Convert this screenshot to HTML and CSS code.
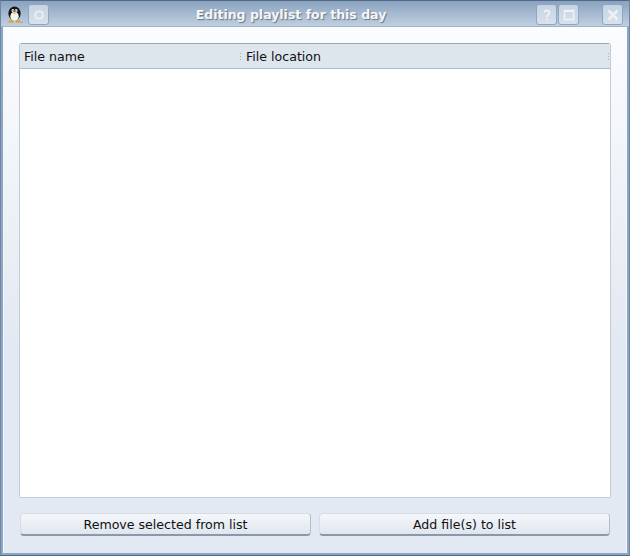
FILE: index.html
```html
<!DOCTYPE html>
<html lang="en">
<head>
<meta charset="utf-8">
<title>Editing playlist for this day</title>
<link rel="stylesheet" href="styles.css">
</head>
<body>
<div class="window">
  <div class="titlebar">
    <svg class="penguin" width="16" height="17" viewBox="0 0 17 18">
      <ellipse cx="8" cy="8" rx="6.500" ry="7.500" fill="#15151a"/>
      <ellipse cx="8" cy="11" rx="4.500" ry="4.800" fill="#f4f4f4"/>
      <ellipse cx="6.300" cy="5" rx="1.500" ry="1.800" fill="#f4f4f4"/>
      <ellipse cx="9.700" cy="5" rx="1.500" ry="1.800" fill="#f4f4f4"/>
      <circle cx="6.600" cy="5.200" r=".7" fill="#111"/>
      <circle cx="9.400" cy="5.200" r=".7" fill="#111"/>
      <path d="M5.600 6.800h4.800L8 8.600z" fill="#e8a317"/>
      <path d="M2 15h5l-.5 2.500H1.500zM9 15h5l.5 2.500H9.500z" fill="#e0a020"/>
      <path d="M14.500 17h2.500v1h-2.500z" fill="#6f7f90" opacity=".5"/>
    </svg>
    <div class="tbtn sticky">
      <svg width="12" height="12" viewBox="0 0 12 12"><circle cx="6" cy="6" r="3.800" fill="none" stroke="#e9eef4" stroke-width="2"/></svg>
    </div>
    <div class="title">Editing playlist for this day</div>
    <div class="tbtn">
      <svg width="12" height="14" viewBox="0 0 12 14"><path d="M3.500 4.500C3.500 1.800 8.500 1.800 8.500 4.500C8.500 6.500 6 6.500 6 9" fill="none" stroke="#eef2f7" stroke-width="2"/><rect x="5" y="10.500" width="2" height="2" fill="#eef2f7"/></svg>
    </div>
    <div class="tbtn">
      <svg width="12" height="12" viewBox="0 0 12 12"><rect x="1.500" y="1.500" width="9" height="9" fill="none" stroke="#eef2f7" stroke-width="1.500"/><rect x="1" y="1" width="10" height="2" fill="#eef2f7"/></svg>
    </div>
    <div class="tbtn close">
      <svg width="14" height="14" viewBox="0 0 14 14"><path d="M2.500 2.500L11.500 11.500M11.500 2.500L2.500 11.500" stroke="#eef2f7" stroke-width="2.500"/></svg>
    </div>
  </div>
  <div class="content">
    <div class="list">
      <div class="list-head">
        <div class="col col-name">File name<span class="grip"></span></div>
        <div class="col col-loc">File location<span class="grip"></span></div>
      </div>
      <div class="list-body"></div>
    </div>
    <div class="actions">
      <button class="btn" type="button">Remove selected from list</button>
      <button class="btn" type="button">Add file(s) to list</button>
    </div>
  </div>
</div>
</body>
</html>
```
FILE: styles.css
```css
* { box-sizing: border-box; }
html, body { margin: 0; padding: 0; }
body {
  width: 630px;
  height: 556px;
  overflow: hidden;
  font-family: "DejaVu Sans", sans-serif;
  font-size: 12.600px;
  color: #111;
}
.window {
  width: 630px;
  height: 556px;
  display: flex;
  flex-direction: column;
  border-top: 1px solid #4d6a8a;
  border-left: 1px solid #6c87a3;
  border-right: 1px solid #6c87a3;
  border-bottom: 1px solid #4f6a88;
  background: #8fa6c2;
}
.titlebar {
  height: 26px;
  flex: none;
  display: flex;
  align-items: center;
  padding: 3px 0 1px 6px;
  background: linear-gradient(#8aa2be, #b0c2d7 70%, #c0cfdf);
  border-bottom: 1px solid #9fb4cb;
}
.penguin { flex: none; margin-right: 5px; }
.tbtn {
  flex: none;
  width: 21px;
  height: 21px;
  margin-left: 1px;
  border: 1px solid #8fa6c0;
  border-radius: 3px;
  background: linear-gradient(#c5d3e3, #d8e1ec);
  display: flex;
  align-items: center;
  justify-content: center;
}
.tbtn.sticky { margin-left: 0; }
.tbtn.close { margin-left: 23px; margin-right: 6px; }
.title {
  flex: 1;
  text-align: center;
  font-weight: bold;
  font-size: 12.500px;
  color: #f4f6fa;
  padding-right: 2px;
  text-shadow: 1px 1px 1px #667686;
}
.content {
  flex: 1;
  margin: 0 2px 2px;
  padding: 16px 15px 17px;
  display: flex;
  flex-direction: column;
  background: linear-gradient(#fbfcfe, #e3e9f2 60%, #e3e9f2);
  border-left: 1px solid #f4f7fb;
  border-right: 1px solid #f4f7fb;
}
.list {
  flex: 1;
  display: flex;
  flex-direction: column;
  border: 1px solid #c3ccd6;
  border-top-color: #a4a9ae;
  border-radius: 3px 3px 2px 2px;
  background: #fff;
}
.list-head {
  height: 25px;
  flex: none;
  display: flex;
  background: #dde5ed;
  border-bottom: 1px solid #9cc0d8;
}
.col {
  position: relative;
  display: flex;
  align-items: center;
  padding-left: 4px;
}
.col-name { width: 222px; }
.col-loc { flex: 1; }
.grip {
  position: absolute;
  right: 1px;
  top: 9px;
  width: 1px;
  height: 9px;
  background: repeating-linear-gradient(#9fb0c0 0 1px, transparent 1px 3px);
}
.list-body { flex: 1; background: #fff; }
.actions {
  flex: none;
  display: flex;
  gap: 8px;
  margin-top: 15px;
  padding: 0 1px;
}
.btn {
  flex: 1;
  height: 23px;
  font: inherit;
  color: #111;
  padding: 0;
  border: 1px solid #d6dde6;
  border-bottom: 2px solid #8c98a6;
  border-right-color: #b4bdc8;
  border-radius: 4px;
  background: linear-gradient(#f5f7fa, #dfe6ee);
}
```
